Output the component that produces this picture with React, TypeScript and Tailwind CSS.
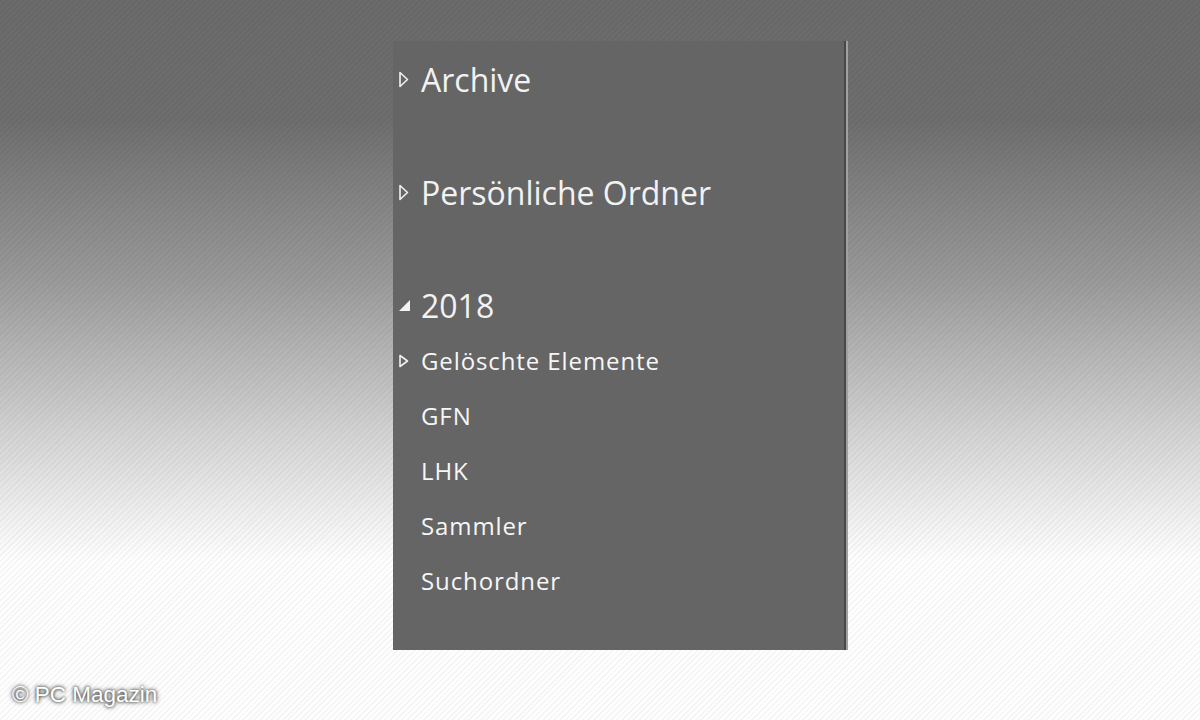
import React from "react";

type Row = {
  label: string;
  size: "lg" | "sm";
  arrow: "closed" | "open" | "none";
  gapBefore?: boolean;
};

const rows: Row[] = [
  { label: "Archive", size: "lg", arrow: "closed" },
  { label: "Persönliche Ordner", size: "lg", arrow: "closed", gapBefore: true },
  { label: "2018", size: "lg", arrow: "open", gapBefore: true },
  { label: "Gelöschte Elemente", size: "sm", arrow: "closed" },
  { label: "GFN", size: "sm", arrow: "none" },
  { label: "LHK", size: "sm", arrow: "none" },
  { label: "Sammler", size: "sm", arrow: "none" },
  { label: "Suchordner", size: "sm", arrow: "none" },
];

const Arrow = ({ kind, size }: { kind: Row["arrow"]; size: Row["size"] }) => {
  if (kind === "none") return <span className="w-[28px] shrink-0" />;
  if (kind === "open") {
    return (
      <span className="w-[28px] shrink-0 flex items-center pl-[5px]">
        <svg width="13" height="13" viewBox="0 0 13 13">
          <path d="M12 1 L12 12 L1 12 Z" fill="#f2f2f2" />
        </svg>
      </span>
    );
  }
  const h = size === "lg" ? 17 : 14;
  return (
    <span className="w-[28px] shrink-0 flex items-center pl-[5px]">
      <svg width="11" height={h} viewBox={`0 0 11 ${h}`}>
        <path
          d={`M2 1.5 L9.5 ${h / 2} L2 ${h - 1.5} Z`}
          fill="none"
          stroke="#f0f0f0"
          strokeWidth="1.6"
          strokeLinejoin="round"
        />
      </svg>
    </span>
  );
};

export default function App() {
  return (
    <div
      className="relative w-full h-[720px] overflow-hidden bg-[repeating-linear-gradient(135deg,rgba(0,0,0,0.035)_0px,rgba(0,0,0,0.035)_2px,transparent_2px,transparent_4px),linear-gradient(to_bottom,#6b6b6b_0px,#6e6e6e_120px,#9a9a9a_280px,#d6d6d6_440px,#ffffff_560px,#ffffff_720px)]"
      style={{ fontFamily: '"Open Sans", "Noto Sans", sans-serif' }}
    >
      <div className="flex pl-[393px] pt-[41px]">
        <div className="flex">
          <div className="w-[451px] h-[609px] bg-[#656565] pt-[11px] flex flex-col">
            {rows.map((r) => (
              <div
                key={r.label}
                className={`flex items-center h-[55px] ${r.gapBefore ? "mt-[58px]" : ""}`}
              >
                <Arrow kind={r.arrow} size={r.size} />
                <span
                  className={
                    r.size === "lg"
                      ? "text-[32px] leading-none text-[#f2f2f2]"
                      : "text-[24px] font-medium leading-none text-[#f6f6f6] tracking-[0.9px]"
                  }
                >
                  {r.label}
                </span>
              </div>
            ))}
          </div>
          <div className="w-[2px] h-[609px] bg-[#484848]" />
          <div className="w-[2px] h-[609px] bg-[#a0a0a0]" />
        </div>
      </div>

      <div
        className="absolute left-[12px] top-[684px] text-[22.5px] leading-none text-white [text-shadow:0_0_3px_#333,0_0_5px_#555]"
        style={{ fontFamily: '"Liberation Sans", Arial, sans-serif' }}
      >
        © PC Magazin
      </div>
    </div>
  );
}
